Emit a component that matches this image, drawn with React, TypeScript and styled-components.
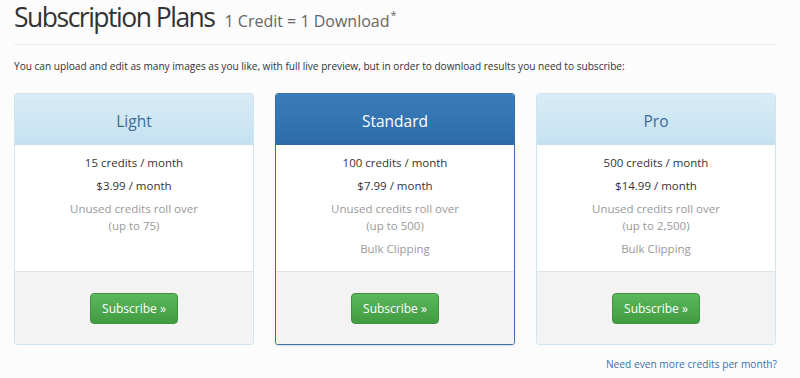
import React from "react";
import styled, { createGlobalStyle } from "styled-components";

const Global = createGlobalStyle`
  html, body { margin: 0; padding: 0; background: #fcfcfc; }
  body { font-family: "Open Sans", "Noto Sans", sans-serif; color: #333; }
`;

const Page = styled.div`
  width: 800px;
  height: 378px;
  box-sizing: border-box;
  padding: 0 23px 0 14px;
  overflow: hidden;
`;

const TitleRow = styled.div`
  display: flex;
  align-items: baseline;
  gap: 10px;
  height: 45px;
  box-sizing: border-box;
  border-bottom: 1px solid #ececec;
`;

const Title = styled.h1`
  margin: 0;
  font-size: 26.5px;
  letter-spacing: -1.5px;
  font-weight: 400;
  color: #333;
  line-height: 35px;
`;

const Subtitle = styled.span`
  font-size: 16px;
  color: #666;
  sup { font-size: 11px; vertical-align: 8px; margin-left: 1px; }
`;

const Intro = styled.p`
  margin: 13px 0 0 0;
  font-size: 10.1px;
  line-height: 16px;
  color: #333;
`;

const Cards = styled.div`
  display: grid;
  grid-template-columns: repeat(3, 240px);
  column-gap: 21px;
  margin-top: 19px;
`;

const Card = styled.div<{ $featured?: boolean }>`
  display: flex;
  flex-direction: column;
  height: 252px;
  box-sizing: border-box;
  border: 1px solid ${(p) => (p.$featured ? "#3b72ad" : "#cfe6f1")};
  border-radius: 3px;
  overflow: hidden;
  background: #fff;
  box-shadow: ${(p) => (p.$featured ? "0 1px 2px rgba(0,0,0,0.12)" : "none")};
`;

const Header = styled.div<{ $featured?: boolean }>`
  height: 51px;
  flex: none;
  display: flex;
  align-items: center;
  justify-content: center;
  padding-top: 3px;
  box-sizing: border-box;
  font-size: 15.5px;
  color: ${(p) => (p.$featured ? "#fff" : "#3b6c96")};
  background: ${(p) =>
    p.$featured
      ? "linear-gradient(#3a7cba, #2d6ca9)"
      : "linear-gradient(#d9ecf7, #c5e1f1)"};
  border-bottom: 1px solid ${(p) => (p.$featured ? "#2d6ca9" : "#c4dfee")};
`;

const Body = styled.div`
  flex: 1;
  display: flex;
  flex-direction: column;
  align-items: center;
  padding-top: 9px;
  font-size: 11.5px;
`;

const Line = styled.div<{ $muted?: boolean }>`
  color: ${(p) => (p.$muted ? "#999" : "#333")};
  line-height: 17px;
  margin-bottom: 6px;
  text-align: center;
`;

const Footer = styled.div`
  height: 72px;
  flex: none;
  display: flex;
  align-items: center;
  justify-content: center;
  background: #f3f3f3;
  border-top: 1px solid #dde3e8;
`;

const Button = styled.button`
  font-family: inherit;
  font-size: 12px;
  color: #fff;
  height: 31px;
  padding: 0 11px;
  border: 1px solid #3f9140;
  border-radius: 4px;
  background: linear-gradient(#5cb85c, #419c41);
  cursor: pointer;
  margin-top: 1px;
`;

const More = styled.div`
  display: flex;
  justify-content: flex-end;
  margin-top: 12px;
`;

const MoreLink = styled.a`
  font-size: 10.2px;
  color: #3b6fa6;
  text-decoration: none;
`;

type Plan = {
  name: string;
  credits: string;
  price: string;
  rollover: string;
  bulk: boolean;
  featured?: boolean;
};

const plans: Plan[] = [
  { name: "Light", credits: "15 credits / month", price: "$3.99 / month", rollover: "(up to 75)", bulk: false },
  { name: "Standard", credits: "100 credits / month", price: "$7.99 / month", rollover: "(up to 500)", bulk: true, featured: true },
  { name: "Pro", credits: "500 credits / month", price: "$14.99 / month", rollover: "(up to 2,500)", bulk: true },
];

export default function App() {
  return (
    <Page>
      <Global />
      <TitleRow>
        <Title>Subscription Plans</Title>
        <Subtitle>
          1 Credit = 1 Download<sup>*</sup>
        </Subtitle>
      </TitleRow>
      <Intro>
        You can upload and edit as many images as you like, with full live preview, but in order to download results you need to subscribe:
      </Intro>
      <Cards>
        {plans.map((p) => (
          <Card key={p.name} $featured={p.featured}>
            <Header $featured={p.featured}>{p.name}</Header>
            <Body>
              <Line>{p.credits}</Line>
              <Line>{p.price}</Line>
              <Line $muted>
                Unused credits roll over
                <br />
                {p.rollover}
              </Line>
              {p.bulk && <Line $muted>Bulk Clipping</Line>}
            </Body>
            <Footer>
              <Button>Subscribe »</Button>
            </Footer>
          </Card>
        ))}
      </Cards>
      <More>
        <MoreLink href="#">Need even more credits per month?</MoreLink>
      </More>
    </Page>
  );
}
